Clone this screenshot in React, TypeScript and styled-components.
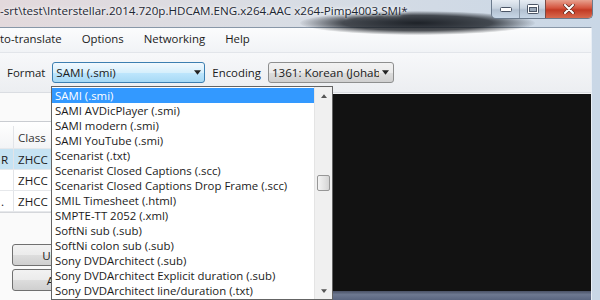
import React from 'react';
import styled, { createGlobalStyle } from 'styled-components';

const GlobalStyle = createGlobalStyle`
  html, body {
    margin: 0;
    padding: 0;
    width: 600px;
    height: 300px;
    overflow: hidden;
    background: #fff;
  }
  body {
    font-family: "Open Sans", "Noto Sans", sans-serif;
    color: #1b1b1b;
  }
`;

const WindowSt = styled.div`
  position: relative;
  width: 600px;
  height: 300px;
  display: flex;
  flex-direction: column;
  overflow: hidden;
  background: linear-gradient(90deg, #e3d9dc 0%, #d9dde4 45%, #c9d7e6 100%);
`;

const TitleBarSt = styled.div`
  position: relative;
  height: 27px;
  flex: none;
  display: flex;
  align-items: flex-start;
  &::before {
    content: '';
    position: absolute;
    left: 300px;
    top: 11px;
    width: 235px;
    height: 24px;
    border-radius: 50%;
    background: radial-gradient(ellipse at center, rgba(20, 24, 30, 0.95) 0%, rgba(20, 24, 30, 0.75) 45%, rgba(20, 24, 30, 0) 72%);
  }
`;

const TitleTextSt = styled.div`
  position: relative;
  font-size: 11.6px;
  padding-top: 3px;
  white-space: nowrap;
  color: #1d2733;
  text-shadow: 0 0 6px #fff, 0 0 3px #fff;
`;

const CaptionsSt = styled.div`
  position: relative;
  margin-left: auto;
  margin-right: 7px;
  display: flex;
  height: 18px;
  border: 1px solid #6b7a8c;
  border-top: none;
  border-radius: 0 0 5px 5px;
  overflow: hidden;
`;

const CaptionBtnSt = styled.div<{ $w: number; $close?: boolean }>`
  width: ${(p) => p.$w}px;
  display: flex;
  align-items: center;
  justify-content: center;
  border-left: ${(p) => (p.$close ? '1px solid #7a4a44' : '1px solid #8896a6')};
  background: ${(p) =>
    p.$close
      ? 'linear-gradient(180deg, #e8a18f 0%, #d4533d 45%, #c23a24 55%, #d86a4e 100%)'
      : 'linear-gradient(180deg, #e6ecf3 0%, #c9d4e0 45%, #b3c1d1 55%, #c7d6e6 100%)'};
  &:first-child {
    border-left: none;
  }
`;

const FrameSt = styled.div`
  flex: 1;
  display: flex;
  flex-direction: column;
  margin-right: 8px;
  background: #fff;
  border-top: 1px solid #8897a8;
  border-right: 1px solid #e8eef5;
  min-height: 0;
`;

const MenuBarSt = styled.div`
  height: 24px;
  flex: none;
  display: flex;
  align-items: center;
  gap: 20px;
  font-size: 11.4px;
  background: linear-gradient(180deg, #fbfcfd 0%, #f1f3f6 100%);
  border-bottom: 1px solid #e2e5ea;
`;

const MenuItemSt = styled.span`
  white-space: nowrap;
  padding-bottom: 3px;
`;

const ToolbarSt = styled.div`
  height: 39px;
  flex: none;
  display: flex;
  align-items: center;
  padding-left: 7px;
  font-size: 11.4px;
  background: linear-gradient(180deg, #f7f8fa 0%, #eceef1 100%);
  border-bottom: 1px solid #dadde2;
`;

const LabelSt = styled.span`
  margin-right: 7px;
  white-space: nowrap;
`;

const ComboSt = styled.div<{ $w: number; $focus?: boolean }>`
  width: ${(p) => p.$w}px;
  height: 21px;
  box-sizing: border-box;
  display: flex;
  align-items: center;
  margin-right: 7px;
  padding-left: 3px;
  border: 1px solid ${(p) => (p.$focus ? '#3c7fb1' : '#8e8f8f')};
  border-radius: 3px;
  background: ${(p) =>
    p.$focus
      ? 'linear-gradient(180deg, #f2f9fe 0%, #d6effc 50%, #bee6fd 51%, #a7d9f5 100%)'
      : 'linear-gradient(180deg, #f2f2f2 0%, #ebebeb 50%, #dddddd 51%, #cfcfcf 100%)'};
  font-size: 11.6px;
  overflow: hidden;
`;

const ComboTextSt = styled.span`
  flex: 1;
  white-space: nowrap;
  overflow: hidden;
`;

const ArrowSt = styled.span`
  width: 14px;
  flex: none;
  display: flex;
  justify-content: center;
  align-items: center;
`;

const BodySt = styled.div`
  flex: 1;
  display: flex;
  min-height: 0;
`;

const LeftPaneSt = styled.div`
  width: 330px;
  flex: none;
  display: flex;
  flex-direction: column;
  padding-top: 28px;
  background: #fafafa;
`;

const ListSt = styled.div`
  border-top: 1px solid #c9ccd1;
  border-bottom: 1px solid #d5d7db;
  background: #fff;
  font-size: 11.6px;
`;

const RowSt = styled.div<{ $head?: boolean; $sel?: boolean }>`
  display: grid;
  grid-template-columns: 14px 1fr;
  height: ${(p) => (p.$head ? 26 : 20)}px;
  align-items: end;
  border-bottom: 1px solid #e6e8eb;
  background: ${(p) => (p.$sel ? '#c6e3f3' : p.$head ? 'linear-gradient(180deg, #ffffff 0%, #f3f4f6 100%)' : '#fff')};
  color: ${(p) => (p.$head ? '#333' : '#1b1b1b')};
`;

const CellSt = styled.div<{ $first?: boolean; $head?: boolean }>`
  height: ${(p) => (p.$head ? 22 : 20)}px;
  display: flex;
  align-items: center;
  padding-left: ${(p) => (p.$first ? 1 : 4)}px;
  border-right: ${(p) => (p.$first ? '1px solid #e2e4e8' : 'none')};
  white-space: nowrap;
  overflow: hidden;
`;

const ButtonsSt = styled.div`
  display: flex;
  flex-direction: column;
  gap: 3px;
  padding: 31px 0 0 12px;
`;

const ButtonSt = styled.div`
  width: 100px;
  height: 22px;
  box-sizing: border-box;
  display: flex;
  align-items: center;
  justify-content: center;
  border: 1px solid #707070;
  border-radius: 3px;
  background: linear-gradient(180deg, #f2f2f2 0%, #ebebeb 50%, #dddddd 51%, #cfcfcf 100%);
  font-size: 11.6px;
`;

const VideoPaneSt = styled.div`
  flex: 1;
  display: flex;
  flex-direction: column;
  padding-top: 1px;
  background: #f4f5f7;
`;

const ScreenSt = styled.div`
  flex: 1;
  background: #121212;
`;

const TimelineSt = styled.div`
  height: 9px;
  flex: none;
  background: linear-gradient(180deg, #4a5266 0%, #6d7890 40%, #5b6680 100%);
`;

const DropdownSt = styled.div`
  position: absolute;
  left: 51px;
  top: 86px;
  width: 282px;
  height: 214px;
  box-sizing: border-box;
  display: flex;
  border: 1px solid #646464;
  background: #fff;
  font-size: 11.4px;
`;

const OptionsSt = styled.div`
  flex: 1;
  padding-top: 1px;
  min-width: 0;
`;

const OptionSt = styled.div<{ $sel?: boolean }>`
  height: 15px;
  line-height: 15px;
  padding-left: 3px;
  white-space: nowrap;
  overflow: hidden;
  background: ${(p) => (p.$sel ? '#3399ff' : 'transparent')};
  color: ${(p) => (p.$sel ? '#fff' : '#1b1b1b')};
`;

const ScrollSt = styled.div`
  width: 17px;
  flex: none;
  display: flex;
  flex-direction: column;
  align-items: center;
  background: #f0f0f0;
  border-left: 1px solid #e4e4e4;
`;

const ScrollArrowSt = styled.div`
  height: 17px;
  display: flex;
  align-items: center;
  justify-content: center;
`;

const ScrollTrackSt = styled.div`
  flex: 1;
  width: 100%;
  display: flex;
  flex-direction: column;
  align-items: center;
  padding-top: 71px;
  box-sizing: border-box;
`;

const ThumbSt = styled.div`
  width: 13px;
  height: 16px;
  box-sizing: border-box;
  border: 1px solid #979797;
  border-radius: 2px;
  background: linear-gradient(90deg, #f4f4f4 0%, #e2e2e2 60%, #d4d4d4 100%);
`;

const Tri = ({ up, size = 7, color = '#222' }: { up?: boolean; size?: number; color?: string }) => (
  <svg width={size} height={Math.ceil(size / 2) + 1} viewBox='0 0 8 5'>
    <path d={up ? 'M0 5 L4 0 L8 5 Z' : 'M0 0 L8 0 L4 5 Z'} fill={color} />
  </svg>
);

const formats = [
  'SAMI (.smi)',
  'SAMI AVDicPlayer (.smi)',
  'SAMI modern (.smi)',
  'SAMI YouTube (.smi)',
  'Scenarist (.txt)',
  'Scenarist Closed Captions (.scc)',
  'Scenarist Closed Captions Drop Frame (.scc)',
  'SMIL Timesheet (.html)',
  'SMPTE-TT 2052 (.xml)',
  'SoftNi sub (.sub)',
  'SoftNi colon sub (.sub)',
  'Sony DVDArchitect (.sub)',
  'Sony DVDArchitect Explicit duration (.sub)',
  'Sony DVDArchitect line/duration (.txt)',
];

const rows = [
  { a: 'R', b: 'ZHCC', sel: true },
  { a: '', b: 'ZHCC' },
  { a: '.', b: 'ZHCC' },
];

export default function App() {
  return (
    <>
      <GlobalStyle />
      <WindowSt>
        <TitleBarSt>
          <TitleTextSt>-srt\test\Interstellar.2014.720p.HDCAM.ENG.x264.AAC x264-Pimp4003.SMI*</TitleTextSt>
          <CaptionsSt>
            <CaptionBtnSt $w={27}>
              <svg width='12' height='5'>
                <rect x='0.5' y='0.5' width='11' height='4' rx='1' fill='#fff' stroke='#4a5566' />
              </svg>
            </CaptionBtnSt>
            <CaptionBtnSt $w={25}>
              <svg width='12' height='10'>
                <rect x='0.5' y='0.5' width='11' height='9' rx='1' fill='#fff' stroke='#4a5566' />
                <rect x='2.5' y='3.5' width='7' height='4' fill='#9aa8b8' stroke='#4a5566' />
              </svg>
            </CaptionBtnSt>
            <CaptionBtnSt $w={46} $close>
              <svg width='12' height='10' viewBox='0 0 12 10'>
                <path d='M2 1 L10 9 M10 1 L2 9' stroke='#5a2a22' strokeWidth='3.4' strokeLinecap='round' />
                <path d='M2 1 L10 9 M10 1 L2 9' stroke='#fff' strokeWidth='2' strokeLinecap='round' />
              </svg>
            </CaptionBtnSt>
          </CaptionsSt>
        </TitleBarSt>
        <FrameSt>
          <MenuBarSt>
            <MenuItemSt>to-translate</MenuItemSt>
            <MenuItemSt>Options</MenuItemSt>
            <MenuItemSt>Networking</MenuItemSt>
            <MenuItemSt>Help</MenuItemSt>
          </MenuBarSt>
          <ToolbarSt>
            <LabelSt>Format</LabelSt>
            <ComboSt $w={153} $focus>
              <ComboTextSt>SAMI (.smi)</ComboTextSt>
              <ArrowSt>
                <Tri />
              </ArrowSt>
            </ComboSt>
            <LabelSt>Encoding</LabelSt>
            <ComboSt $w={126}>
              <ComboTextSt>1361: Korean (Johab)</ComboTextSt>
              <ArrowSt>
                <Tri />
              </ArrowSt>
            </ComboSt>
          </ToolbarSt>
          <BodySt>
            <LeftPaneSt>
              <ListSt>
                <RowSt $head>
                  <CellSt $first $head />
                  <CellSt $head>Class</CellSt>
                </RowSt>
                {rows.map((r, i) => (
                  <RowSt key={i} $sel={r.sel}>
                    <CellSt $first>{r.a}</CellSt>
                    <CellSt>{r.b}</CellSt>
                  </RowSt>
                ))}
              </ListSt>
              <ButtonsSt>
                <ButtonSt>Update</ButtonSt>
                <ButtonSt>Apply</ButtonSt>
              </ButtonsSt>
            </LeftPaneSt>
            <VideoPaneSt>
              <ScreenSt />
              <TimelineSt />
            </VideoPaneSt>
          </BodySt>
        </FrameSt>
        <DropdownSt>
          <OptionsSt>
            {formats.map((f, i) => (
              <OptionSt key={f} $sel={i === 0}>
                {f}
              </OptionSt>
            ))}
          </OptionsSt>
          <ScrollSt>
            <ScrollArrowSt>
              <Tri up size={6} color='#555' />
            </ScrollArrowSt>
            <ScrollTrackSt>
              <ThumbSt />
            </ScrollTrackSt>
            <ScrollArrowSt>
              <Tri size={6} color='#555' />
            </ScrollArrowSt>
          </ScrollSt>
        </DropdownSt>
      </WindowSt>
    </>
  );
}
